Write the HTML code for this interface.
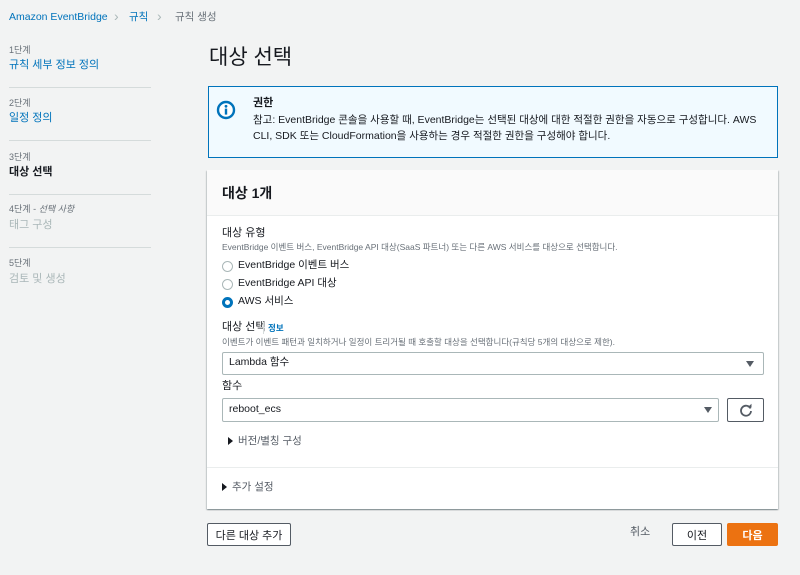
<!DOCTYPE html>
<html><head><meta charset="utf-8"><style>
*{margin:0;padding:0;box-sizing:border-box}
body{width:800px;height:575px;background:#f2f3f3;font-family:"Liberation Sans","Noto Sans CJK KR",sans-serif;color:#16191f;position:relative;overflow:hidden}
.a{position:absolute;white-space:nowrap;line-height:1}
.b{color:#0073bb}
.g{color:#687078}
.s{font-size:9px;color:#687078}
.hr{position:absolute;left:9px;width:142px;height:1px;background:#d5dbdb}
.sel{position:absolute;background:#fff;border:1px solid #aab7b8;border-radius:2px}
.tri{position:absolute;width:0;height:0;border-left:4px solid transparent;border-right:4px solid transparent;border-top:6px solid #545b64}
.rt{position:absolute;width:0;height:0;border-top:4px solid transparent;border-bottom:4px solid transparent;border-left:5px solid #16191f}
.rad{position:absolute;width:11px;height:11px;border-radius:50%;border:1px solid #aab7b8;background:#fff}
.btn{position:absolute;border:1px solid #545b64;background:#fff;border-radius:2px;font-size:11px;color:#16191f;display:flex;align-items:center;justify-content:center}
</style></head><body>
<div class="a b" style="left:9px;top:12px;font-size:10.5px">Amazon EventBridge</div>
<div class="a" style="left:114px;top:9px;font-size:14px;color:#aab7b8">&#x203A;</div>
<div class="a b" style="left:129px;top:12px;font-size:10.5px">규칙</div>
<div class="a" style="left:157px;top:9px;font-size:14px;color:#aab7b8">&#x203A;</div>
<div class="a g" style="left:175px;top:12px;font-size:10.5px">규칙 생성</div>

<div class="a s" style="left:9px;top:46px">1단계</div>
<div class="a b" style="left:9px;top:60px;font-size:11px">규칙 세부 정보 정의</div>
<div class="hr" style="top:87px"></div>
<div class="a s" style="left:9px;top:99px">2단계</div>
<div class="a b" style="left:9px;top:113px;font-size:11px">일정 정의</div>
<div class="hr" style="top:140px"></div>
<div class="a s" style="left:9px;top:153px">3단계</div>
<div class="a" style="left:9px;top:167px;font-size:11px;font-weight:bold">대상 선택</div>
<div class="hr" style="top:194px"></div>
<div class="a s" style="left:9px;top:205px">4단계 - <i>선택 사항</i></div>
<div class="a" style="left:9px;top:220px;font-size:11px;color:#aab7b8">태그 구성</div>
<div class="hr" style="top:247px"></div>
<div class="a s" style="left:9px;top:259px">5단계</div>
<div class="a" style="left:9px;top:274px;font-size:11px;color:#aab7b8">검토 및 생성</div>

<div class="a" style="left:209px;top:47px;font-size:21px">대상 선택</div>

<div style="position:absolute;left:208px;top:86px;width:570px;height:72px;background:#f1faff;border:1px solid #0073bb"></div>
<svg style="position:absolute;left:216px;top:100px" width="20" height="20" viewBox="0 0 20 20"><circle cx="10" cy="10" r="8" fill="#fff" stroke="#0073bb" stroke-width="2.4"/><circle cx="10" cy="6.3" r="1.4" fill="#0073bb"/><rect x="8.8" y="8.6" width="2.4" height="6" fill="#0073bb"/></svg>
<div class="a" style="left:253px;top:98px;font-size:11px;font-weight:bold">권한</div>
<div class="a" style="left:253px;top:115px;font-size:10.5px">참고: EventBridge 콘솔을 사용할 때, EventBridge는 선택된 대상에 대한 적절한 권한을 자동으로 구성합니다. AWS</div>
<div class="a" style="left:253px;top:131px;font-size:10.5px">CLI, SDK 또는 CloudFormation을 사용하는 경우 적절한 권한을 구성해야 합니다.</div>

<div style="position:absolute;left:207px;top:170px;width:571px;height:339px;background:#fff;box-shadow:0 1px 1px 0 rgba(0,28,36,.3),1px 1px 1px 0 rgba(0,28,36,.15),-1px 1px 1px 0 rgba(0,28,36,.15)"></div>
<div style="position:absolute;left:207px;top:170px;width:571px;height:46px;background:#fafafa;border-bottom:1px solid #eaeded"></div>
<div class="a" style="left:222px;top:186px;font-size:14px;font-weight:bold">대상 1개</div>

<div class="a" style="left:222px;top:228px;font-size:11px">대상 유형</div>
<div class="a s" style="left:222px;top:243px;font-size:8.5px">EventBridge 이벤트 버스, EventBridge API 대상(SaaS 파트너) 또는 다른 AWS 서비스를 대상으로 선택합니다.</div>
<div class="rad" style="left:222px;top:261px"></div>
<div class="a" style="left:238px;top:260px;font-size:10.5px">EventBridge 이벤트 버스</div>
<div class="rad" style="left:222px;top:279px"></div>
<div class="a" style="left:238px;top:278px;font-size:10.5px">EventBridge API 대상</div>
<div class="rad" style="left:222px;top:297px;border:3px solid #0073bb"></div>
<div class="a" style="left:238px;top:296px;font-size:10.5px">AWS 서비스</div>

<div class="a" style="left:222px;top:322px;font-size:11px">대상 선택</div>
<div style="position:absolute;left:263px;top:322px;width:1px;height:12px;background:#d5dbdb"></div>
<div class="a b" style="left:268px;top:324px;font-size:8.5px;font-weight:bold">정보</div>
<div class="a s" style="left:222px;top:338px;font-size:8.5px">이벤트가 이벤트 패턴과 일치하거나 일정이 트리거될 때 호출할 대상을 선택합니다(규칙당 5개의 대상으로 제한).</div>
<div class="sel" style="left:222px;top:352px;width:542px;height:23px"></div>
<div class="a" style="left:229px;top:357px;font-size:10.5px">Lambda 함수</div>
<div class="tri" style="left:746px;top:361px"></div>
<div class="a" style="left:222px;top:381px;font-size:11px">함수</div>
<div class="sel" style="left:222px;top:398px;width:497px;height:24px"></div>
<div class="a" style="left:229px;top:404px;font-size:10.5px">reboot_ecs</div>
<div class="tri" style="left:704px;top:407px"></div>
<div class="btn" style="left:727px;top:398px;width:37px;height:24px">
<svg width="14" height="14" viewBox="0 0 14 14"><path d="M11.5 5.5A5 5 0 1 0 12 8" fill="none" stroke="#545b64" stroke-width="1.8"/><path d="M8.5 4.5H12.5V0.8Z" fill="#545b64"/></svg></div>
<div class="rt" style="left:228px;top:437px"></div>
<div class="a" style="left:238px;top:436px;font-size:10.5px;color:#545b64">버전/별칭 구성</div>
<div style="position:absolute;left:207px;top:467px;width:571px;height:1px;background:#eaeded"></div>
<div class="rt" style="left:222px;top:483px"></div>
<div class="a" style="left:232px;top:482px;font-size:10.5px;color:#545b64">추가 설정</div>

<div class="btn" style="left:207px;top:523px;width:84px;height:23px">다른 대상 추가</div>
<div class="a" style="left:630px;top:527px;font-size:11px;color:#545b64">취소</div>
<div class="btn" style="left:672px;top:523px;width:50px;height:23px">이전</div>
<div class="btn" style="left:727px;top:523px;width:51px;height:23px;background:#ec7211;border-color:#ec7211;color:#fff;font-weight:bold">다음</div>
</body></html>
